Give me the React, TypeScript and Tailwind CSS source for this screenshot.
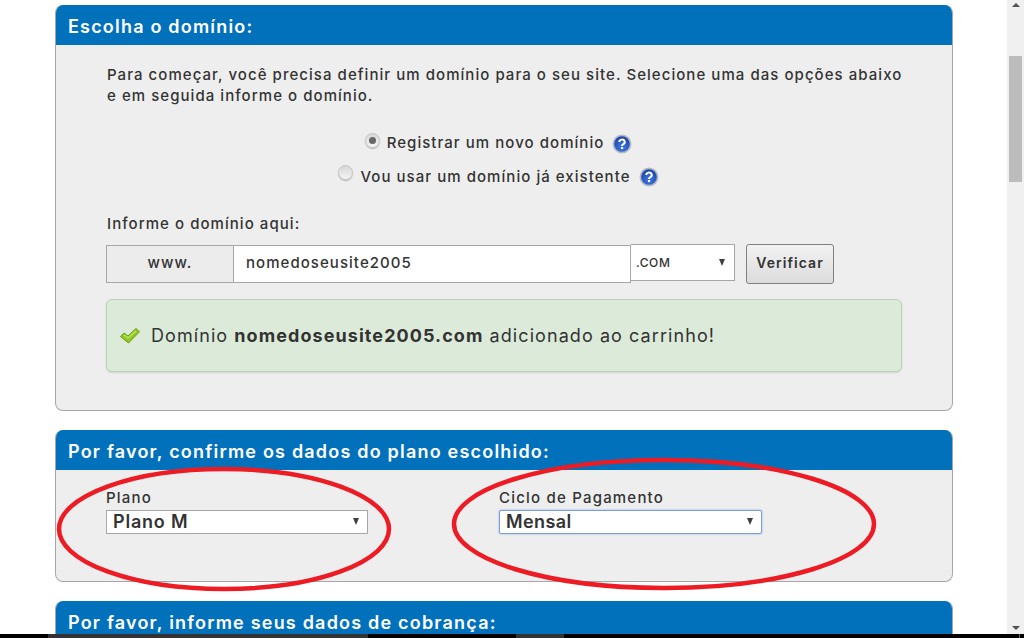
function Panel({ title, children }: { title: string; children?: React.ReactNode }) {
  return (
    <section className="rounded-[8px] bg-[#eeeeee] border border-[#a6a6a6] border-t-0 overflow-hidden">
      <h2 className="h-[40px] -mx-px bg-[#0271bc] text-white text-[18px] font-semibold leading-[44px] pl-[13px] tracking-[1.2px]">
        {title}
      </h2>
      {children}
    </section>
  );
}

function HelpIcon({ id }: { id: string }) {
  return (
    <svg width="20" height="20" viewBox="0 0 20 20">
      <defs>
        <radialGradient id={id} cx="50%" cy="70%" r="65%">
          <stop offset="0%" stopColor="#3f7be8" />
          <stop offset="100%" stopColor="#1f45a8" />
        </radialGradient>
      </defs>
      <circle cx="10" cy="10" r="9.5" fill="#b4bac4" />
      <circle cx="10" cy="10" r="7.8" fill={`url(#${id})`} />
      <path d="M7.3 8a2.7 2.4 0 1 1 4 2.1c-.9.5-1.3.9-1.3 1.9" fill="none" stroke="#fff" strokeWidth="2" />
      <rect x="9" y="13" width="2.1" height="2.1" fill="#fff" />
    </svg>
  );
}

function Radio({ checked }: { checked?: boolean }) {
  return (
    <span className={`${checked ? '-mt-[6px]' : '-mt-[10px]'} w-[15px] h-[15px] rounded-full border border-[#c4c4c4] bg-gradient-to-b from-[#d6d6d6] to-[#f6f6f6] shadow-[0_1px_1px_rgba(0,0,0,0.25)] flex items-center justify-center`}>
      {checked && <span className="w-[7px] h-[7px] rounded-full bg-[#686868]" />}
    </span>
  );
}

function Caret() {
  return <span className="w-0 h-0 border-x-[3px] border-x-transparent border-t-[7px] border-t-[#404040]" />;
}

export default function App() {
  return (
    <div className="relative h-[638px] overflow-hidden bg-white text-[#333333] font-['Inter',sans-serif]">
      <div className="w-[898px] ml-[55px] pt-[5px] flex flex-col gap-[19px]">
        <Panel title="Escolha o domínio:">
          <div className="h-[365px] px-[50px] pt-[19px] text-[15px] font-medium tracking-[1.05px]">
            <p className="leading-[21px] pl-px -mr-[4px]">
              Para começar, você precisa definir um domínio para o seu site. Selecione uma das opções abaixo e em seguida informe o domínio.
            </p>
            <div className="mt-[27px] flex flex-col items-center gap-[13px]">
              <div className="flex items-center gap-[7px] h-[21px] -ml-[11px]">
                <Radio checked />
                <span>Registrar um novo domínio</span>
                <span className="ml-[1px]"><HelpIcon id="help-a" /></span>
              </div>
              <div className="flex items-center gap-[7px] h-[21px] -ml-[11px]">
                <Radio />
                <span>Vou usar um domínio já existente</span>
                <span className="ml-[1px] -mt-[2px]"><HelpIcon id="help-b" /></span>
              </div>
            </div>
            <label className="block mt-[26px] pl-px leading-[20px]">Informe o domínio aqui:</label>
            <div className="mt-[11px] flex items-start">
              <div className="w-[128px] h-[38px] border border-[#a6a6a6] bg-[#ececec] flex items-center justify-center pb-[2px]">www.</div>
              <div className="w-[397px] h-[38px] border border-l-0 border-[#a6a6a6] bg-white flex items-center pl-[12px] pb-[2px]">nomedoseusite2005</div>
              <div className="w-[104px] h-[37px] -mt-px border border-l-0 border-[#a6a6a6] bg-white flex items-center justify-between pl-[5px] pr-[9px] text-[12px] tracking-[0.6px]">
                .COM
                <Caret />
              </div>
              <button className="ml-[11px] -mt-px w-[88px] h-[40px] pb-[4px] rounded-[3px] border border-[#808080] bg-gradient-to-b from-[#f2f2f2] to-[#dcdcdc] font-semibold text-[14px] tracking-[1.05px]">
                Verificar
              </button>
            </div>
            <div className="mt-[15px] h-[73px] rounded-[6px] border border-[#b5d5b0] bg-[#dcebd9] shadow-[0_1px_2px_rgba(0,0,0,0.12)] flex items-center pl-[12px] text-[18px] font-normal tracking-[1.07px]">
              <svg width="22" height="20" viewBox="0 0 22 20" className="mr-[10px]">
                <path d="M1.5 10.5l3.5-3.5 4 3 8-7.5 3.5 3.2L9.5 17z" fill="#8fc820" stroke="#6c9a16" strokeWidth="1" strokeLinejoin="round" />
                <path d="M5 9l4 3 8-7" fill="none" stroke="#c5e56a" strokeWidth="1.2" />
              </svg>
              <span>
                Domínio <b className="font-bold">nomedoseusite2005.com</b> adicionado ao carrinho!
              </span>
            </div>
          </div>
        </Panel>
        <Panel title="Por favor, confirme os dados do plano escolhido:">
          <div className="h-[111px] pl-[50px] pt-[19px] flex gap-[131px]">
            <div className="w-[262px]">
              <label className="block text-[15px] leading-[17px] font-medium tracking-[1.2px]">Plano</label>
              <div className="mt-[4px] h-[24px] pb-[2px] border border-[#a6a6a6] bg-white flex items-center justify-between pl-[6px] pr-[8px] text-[18px] font-semibold tracking-[0.8px]">
                Plano M
                <Caret />
              </div>
            </div>
            <div className="w-[263px]">
              <label className="block text-[15px] leading-[17px] font-medium tracking-[1.2px]">Ciclo de Pagamento</label>
              <div className="mt-[4px] h-[24px] pb-[2px] rounded-[2px] border border-[#7f9fdc] shadow-[0_0_2px_#7aa5f0] bg-white flex items-center justify-between pl-[6px] pr-[8px] text-[18px] font-semibold tracking-[0.4px]">
                Mensal
                <Caret />
              </div>
            </div>
          </div>
        </Panel>
        <Panel title="Por favor, informe seus dados de cobrança:" />
      </div>

      {/* marcações vermelhas */}
      <svg className="absolute left-0 top-0 pointer-events-none" width="1024" height="638">
        <ellipse cx="224" cy="529" rx="165" ry="60" fill="none" stroke="#ed1c24" strokeWidth="4.5" />
        <ellipse cx="664" cy="524" rx="210" ry="64" fill="none" stroke="#ed1c24" strokeWidth="4.5" />
      </svg>

      {/* scrollbar */}
      <div className="absolute right-0 top-0 bottom-0 w-[17px] bg-[#f0f0f0]">
        <div className="absolute left-[2px] top-[56px] w-[13px] h-[126px] bg-[#bcbcbc]" />
        <span className="absolute left-[5px] top-[3px] w-0 h-0 border-x-[4px] border-x-transparent border-b-[4px] border-b-[#505050]" />
        <span className="absolute left-[5px] bottom-[8px] w-0 h-0 border-x-[4px] border-x-transparent border-t-[4px] border-t-[#505050]" />
      </div>

      {/* barra inferior */}
      <div className="absolute left-0 right-0 bottom-0 h-[4px] bg-black">
        <div className="absolute left-[48px] w-[320px] h-full bg-[#333333]" />
        <div className="absolute left-[516px] w-[48px] h-full bg-[#333333]" />
        <div className="absolute left-[1019px] w-px h-full bg-[#666666]" />
      </div>
    </div>
  );
}
